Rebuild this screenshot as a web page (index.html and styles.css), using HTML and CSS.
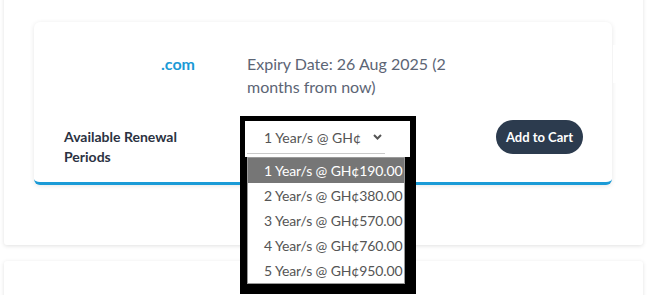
FILE: index.html
```html
<!DOCTYPE html>
<html lang="en">
<head>
    <meta charset="UTF-8">
    <meta name="viewport" content="width=device-width, initial-scale=1.0">
    <title>Domain Renewal</title>
    <link rel="stylesheet" href="styles.css">
</head>
<body>
    <div class="panel">
        <div class="domain-card">
            <div class="info-row">
                <div class="domain-name">.com</div>
                <div class="expiry">Expiry Date: 26 Aug 2025 (2 months from now)</div>
            </div>
            <div class="renew-row">
                <div class="renew-label"><span>Available Renewal Periods</span></div>
                <div class="select-wrap">
                    <span class="select-value">1 Year/s @ GH&cent;</span>
                    <svg class="chevron" width="9" height="6" viewBox="0 0 9 6">
                        <path d="M1 1 L4.5 4.5 L8 1" fill="none" stroke="#555" stroke-width="2"/>
                    </svg>

                    <!-- highlight frame + open list -->
                    <div class="frame"></div>
                    <div class="dropdown">
                        <ul class="options">
                            <li class="selected">1 Year/s @ GH&cent;190.00</li>
                            <li>2 Year/s @ GH&cent;380.00</li>
                            <li>3 Year/s @ GH&cent;570.00</li>
                            <li>4 Year/s @ GH&cent;760.00</li>
                            <li>5 Year/s @ GH&cent;950.00</li>
                        </ul>
                    </div>
                </div>
                <button class="cart-btn">Add to Cart</button>
            </div>
        </div>
    </div>
    <div class="panel next"></div>
</body>
</html>
```

FILE: styles.css
```css
body {
    margin: 0;
    background: #fff;
    font-family: Lato, "Open Sans", sans-serif;
    overflow: hidden;
}

.panel {
    width: 639px;
    margin: -12px 0 0 4px;
    padding: 34px 0 60px 0;
    box-sizing: border-box;
    background: #fff;
    box-shadow: 0 1px 4px rgba(0, 0, 0, 0.12);
    border-radius: 3px;
}
.panel.next {
    margin-top: 16px;
    height: 120px;
}

.domain-card {
    margin-left: 30px;
    width: 578px;
    box-sizing: border-box;
    padding: 30px 29px 15px 30px;
    background: #fff;
    border-radius: 6px;
    border-bottom: 3px solid #1a9ad6;
    box-shadow: 0 1px 5px rgba(0, 0, 0, 0.1);
}

.info-row {
    display: flex;
    position: relative;
}
.info-row::after {
    content: "";
    position: absolute;
    right: -60px;
    top: -7px;
    width: 30px;
    height: 38px;
    background: #fff;
}
.domain-name {
    width: 183px;
    box-sizing: border-box;
    padding-right: 52px;
    text-align: right;
    color: #1a9ad6;
    font-weight: 700;
    font-size: 16px;
    line-height: 23px;
}
.expiry {
    width: 205px;
    color: #5c6575;
    font-size: 16px;
    line-height: 23px;
}

.renew-row {
    display: flex;
    align-items: flex-start;
    margin-top: 22px;
}
.renew-label {
    width: 183px;
    box-sizing: border-box;
    padding-right: 55px;
    margin-top: 7px;
    font-size: 14px;
    font-weight: 700;
    line-height: 20px;
    color: #2b3242;
}

.select-wrap {
    position: relative;
    width: 138px;
    height: 33px;
    margin-top: 1px;
    box-sizing: border-box;
    border-bottom: 1px solid #cacaca;
    padding-left: 17px;
    display: flex;
    align-items: center;
    font-size: 14px;
    color: #555;
}
.chevron {
    margin-left: auto;
    margin-right: 3px;
}

.frame {
    position: absolute;
    left: -7px;
    top: -5px;
    width: 176px;
    height: 41px;
    box-sizing: border-box;
    border: 5px solid #000;
    border-right-width: 6px;
    border-bottom: none;
}
.dropdown {
    position: absolute;
    left: -7px;
    top: 36px;
    width: 176px;
    box-sizing: border-box;
    padding: 0 11px 10px 7px;
    background: #000;
    z-index: 5;
}
.options {
    list-style: none;
    margin: 0;
    padding: 0;
    background: #fff;
    border: 1px solid #9a9a9a;
}
.options li {
    height: 25px;
    line-height: 25px;
    padding-left: 16px;
    font-size: 14px;
    letter-spacing: -0.12px;
    color: #555;
    white-space: nowrap;
}
.options li.selected {
    background: #767676;
    color: #fff;
}

.cart-btn {
    margin-left: auto;
    height: 34px;
    padding: 0 10px;
    border: none;
    border-radius: 17px;
    background: #2c3b4e;
    color: #fff;
    font-family: Lato, sans-serif;
    font-size: 13px;
    font-weight: 700;
}
```
